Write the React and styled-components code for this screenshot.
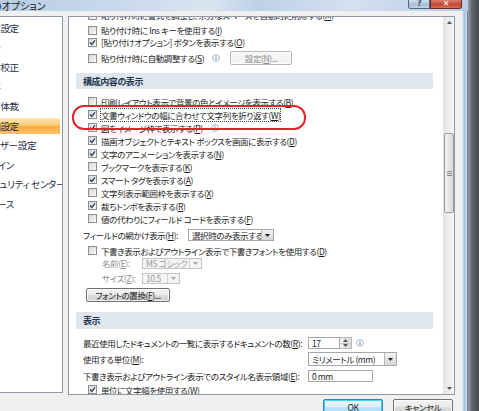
import React from "react";
import styled, { createGlobalStyle } from "styled-components";

const GlobalStyle = createGlobalStyle`
  html, body { margin: 0; padding: 0; background: #55595f; }
  * { box-sizing: border-box; }
`;

const Screen = styled.div`
  position: relative;
  display: flex;
  width: 479px;
  height: 411px;
  overflow: hidden;
  font-family: "Noto Sans CJK JP", "Liberation Sans", sans-serif;
  font-feature-settings: "palt" 1;
  font-size: 8.5px;
  letter-spacing: -0.4px;
  color: #1e1e1e;
`;

const Window = styled.div`
  display: flex;
  flex-direction: column;
  width: 468px;
`;

const Outside = styled.div`
  flex: 1;
  background: linear-gradient(90deg, #9aa1a9 0%, #62676e 35%, #45484d 100%);
`;

const TitleBar = styled.div`
  height: 13px;
  display: flex;
  justify-content: space-between;
  background: linear-gradient(100deg, #b8cde3 0%, #c8d9eb 25%, #d9e5f2 45%, #bdd1e7 55%, #d3e1f0 75%, #b7cce3 100%);
`;

const Title = styled.div`
  margin-left: -8px;
  line-height: 11px;
  font-size: 10px;
  letter-spacing: 0;
  color: #1b1b1b;
`;

const Caption = styled.div`
  display: flex;
  margin-right: 6px;
  height: 9px;
`;

const CaptionBtn = styled.div`
  width: ${(p) => p.$w}px;
  height: 9px;
  display: flex;
  align-items: flex-end;
  justify-content: center;
  font-family: "DejaVu Sans", sans-serif;
  font-weight: bold;
  font-size: 8px;
  line-height: 8px;
  color: ${(p) => (p.$close ? "#fff" : "#3b4e66")};
  border: 1px solid ${(p) => (p.$close ? "#6d2a22" : "#55677e")};
  border-top: none;
  border-radius: ${(p) => (p.$close ? "0 0 3px 0" : "0 0 0 3px")};
  background: ${(p) =>
    p.$close
      ? "linear-gradient(#d77f6f, #c4432f 60%, #d9745c)"
      : "linear-gradient(#d3dfec, #a9bdd5 60%, #c5d5e6)"};
`;

const ClientRow = styled.div`
  flex: 1;
  display: flex;
`;

const Client = styled.div`
  width: 462px;
  background: #f0f0f0;
  padding-top: 5px;
  display: flex;
  flex-direction: column;
`;

const FrameRight = styled.div`
  flex: 1;
  background: linear-gradient(90deg, #dfe9f4, #a7c2de 50%, #d3e2f1);
  border-right: 1px solid #6f8198;
`;

const Main = styled.div`
  display: flex;
  align-items: flex-start;
  gap: 5px;
`;

const Nav = styled.div`
  width: 63px;
  height: 377px;
  background: #fff;
  border: 1px solid #8e9aa8;
  border-left: none;
  padding-top: 3px;
  overflow: hidden;
`;

const NavItem = styled.div`
  height: 16px;
  margin: 0 2px 3.5px 0;
  line-height: 16px;
  font-size: 9.5px;
  letter-spacing: -0.3px;
  color: #1d2c46;
  white-space: nowrap;
  background: ${(p) =>
    p.$active ? "linear-gradient(#fde7b8, #fccb74 45%, #f9ab42 55%, #fbc466)" : "transparent"};
`;

const NavLabel = styled.span`
  margin-left: -18px;
`;

const Panel = styled.div`
  width: 387px;
  height: 379px;
  background: #fff;
  border: 1px solid #8e9aa8;
  display: flex;
  overflow: hidden;
`;

const ScrollArea = styled.div`
  flex: 1;
  overflow: hidden;
`;

const List = styled.div`
  margin-top: -11px;
  padding: 0 10px 0 7px;
  display: flex;
  flex-direction: column;
`;

const CheckRow = styled.div`
  height: ${(p) => p.$h || 13}px;
  display: flex;
  align-items: center;
  gap: 4px;
  padding-left: 12px;
  white-space: nowrap;
  color: ${(p) => (p.$disabled ? "#8d8d8d" : "inherit")};
`;

const FieldRow = styled.div`
  height: ${(p) => p.$h || 13}px;
  margin-top: ${(p) => p.$mt || 0}px;
  display: flex;
  align-items: center;
  padding-left: ${(p) => p.$pl ?? 7}px;
  white-space: nowrap;
`;

const FieldLabel = styled.span`
  width: ${(p) => p.$w}px;
  flex: none;
  color: ${(p) => (p.$disabled ? "#8d8d8d" : "inherit")};
`;

const Section = styled.div`
  height: ${(p) => p.$h}px;
  margin: ${(p) => p.$mt}px 0 ${(p) => p.$mb}px;
  background: #dfe6ee;
  padding-left: 7px;
  display: flex;
  align-items: center;
  font-weight: bold;
  font-size: 9px;
  color: #22324c;
`;

const Box = styled.span`
  width: 9px;
  height: 9px;
  flex: none;
  border: 1px solid #8e8f8f;
  background: linear-gradient(135deg, #d6d6d6, #f9f9f9);
  display: flex;
`;

const Focus = styled.span`
  outline: 1px dotted #444;
  outline-offset: 0;
`;

const Btn = styled.div`
  width: ${(p) => p.$w}px;
  height: ${(p) => p.$h || 14}px;
  display: flex;
  align-items: center;
  justify-content: center;
  border: 1px solid ${(p) => (p.$disabled ? "#b3b7ba" : p.$default ? "#3c7fb1" : "#707070")};
  border-radius: 2px;
  color: ${(p) => (p.$disabled ? "#8b8b8b" : "#1e1e1e")};
  background: ${(p) =>
    p.$disabled
      ? "#f4f4f4"
      : p.$default
      ? "linear-gradient(#eaf6fd, #d9f0fc 50%, #bee6fd 51%, #a7d9f5)"
      : "linear-gradient(#f2f2f2, #ebebeb 50%, #dddddd 51%, #cfcfcf)"};
  box-shadow: inset 0 0 0 1px ${(p) => (p.$default ? "#48d0f8" : "rgba(255,255,255,0.7)")};
`;

const Select = styled.div`
  width: ${(p) => p.$w}px;
  height: ${(p) => p.$h || 12}px;
  flex: none;
  display: flex;
  border: 1px solid ${(p) => (p.$disabled ? "#c2c5c8" : "#a3a9b1")};
  background: ${(p) => (p.$disabled ? "#f4f4f4" : "#fff")};
  color: ${(p) => (p.$disabled ? "#9a9a9a" : "#1e1e1e")};
  overflow: hidden;
`;

const SelectText = styled.span`
  flex: 1;
  padding-left: 3px;
  display: flex;
  align-items: center;
  white-space: nowrap;
  overflow: hidden;
`;

const DropBtn = styled.span`
  width: 12px;
  flex: none;
  display: flex;
  align-items: center;
  justify-content: center;
  border-left: 1px solid ${(p) => (p.$disabled ? "#d0d3d6" : "#b5bac0")};
  background: ${(p) => (p.$disabled ? "#f4f4f4" : "linear-gradient(#f4f4f4, #e4e4e4 50%, #d6d6d6)")};
`;

const Spin = styled.span`
  width: 12px;
  height: 12px;
  flex: none;
  display: flex;
  flex-direction: column;
  border: 1px solid #b5bac0;
  border-left: none;
  background: linear-gradient(90deg, #f2f2f2, #dcdcdc);
`;

const SpinHalf = styled.span`
  flex: 1;
  display: flex;
  align-items: center;
  justify-content: center;
  & + & { border-top: 1px solid #c4c8cc; }
`;

const Gap = styled.span`
  width: ${(p) => p.$w}px;
  flex: none;
`;

const Scrollbar = styled.div`
  width: 11px;
  display: flex;
  flex-direction: column;
  background: linear-gradient(90deg, #e6e6e6, #f5f5f5);
  border-left: 1px solid #e3e3e3;
`;

const ArrowBtn = styled.div`
  height: 11px;
  display: flex;
  align-items: center;
  justify-content: center;
`;

const Thumb = styled.div`
  height: 80px;
  margin-top: ${(p) => p.$top}px;
  border: 1px solid #9a9a9a;
  border-radius: 2px;
  background: linear-gradient(90deg, #f4f4f4, #e5e5e5 50%, #d9d9d9);
  display: flex;
  align-items: center;
  justify-content: center;
`;

const Track = styled.div`
  flex: 1;
`;

const Footer = styled.div`
  display: flex;
  justify-content: flex-end;
  gap: 10px;
  margin-top: 4px;
  padding-right: 9px;
`;

const Marker = styled.div`
  position: absolute;
  left: 72px;
  top: 105px;
  width: 234px;
  height: 25px;
  border: 2.5px solid #e0242a;
  border-radius: 12px;
  pointer-events: none;
`;

const Check = () => (
  <svg width="7" height="7" viewBox="0 0 7 7">
    <path d="M1 3.6 L2.8 5.4 L6 1.4" fill="none" stroke="#2d4068" strokeWidth="1.4" />
  </svg>
);

const CheckBox = ({ on }) => <Box>{on && <Check />}</Box>;

const Info = () => (
  <svg width="8" height="8" viewBox="0 0 8 8" style={{ marginLeft: 4, flex: "none" }}>
    <circle cx="4" cy="4" r="3.3" fill="#fff" stroke="#8aa3c4" strokeWidth="0.8" />
    <rect x="3.55" y="3.3" width="0.9" height="2.6" fill="#4b73a8" />
    <rect x="3.55" y="1.9" width="0.9" height="0.8" fill="#4b73a8" />
  </svg>
);

const Tri = ({ up, color = "#222" }) => (
  <svg width="5" height="3" viewBox="0 0 5 3">
    <path d={up ? "M0 3 L2.5 0 L5 3 Z" : "M0 0 L5 0 L2.5 3 Z"} fill={color} />
  </svg>
);

const Item = ({ label, k, on, h, info, focus, children }) => {
  const text = (
    <span>
      {label}(<u>{k}</u>)
    </span>
  );
  return (
    <CheckRow $h={h}>
      <CheckBox on={on} />
      {focus ? <Focus>{text}</Focus> : text}
      {info && <Info />}
      {children}
    </CheckRow>
  );
};

const navItems = [
  "基本設定",
  "表示",
  "文章校正",
  "保存",
  "文字体裁",
  "詳細設定",
  "ユーザー設定",
  "アドイン",
  "セキュリティ センター",
  "リソース",
];

const displayItems = [
  ["印刷レイアウト表示で背景の色とイメージを表示する", "B", false],
  ["文書ウィンドウの幅に合わせて文字列を折り返す", "W", true, true],
  ["図をイメージ枠で表示する", "P", true, false, true],
  ["描画オブジェクトとテキスト ボックスを画面に表示する", "D", true],
  ["文字のアニメーションを表示する", "N", true],
  ["ブックマークを表示する", "K", false],
  ["スマート タグを表示する", "A", true],
  ["文字列表示範囲枠を表示する", "X", false],
  ["裁ちトンボを表示する", "R", true],
  ["値の代わりにフィールド コードを表示する", "F", false],
];

export default function App() {
  return (
    <Screen>
      <GlobalStyle />
      <Window>
        <TitleBar>
          <Title>のオプション</Title>
          <Caption>
            <CaptionBtn $w={22}>?</CaptionBtn>
            <CaptionBtn $w={32} $close>
              ✕
            </CaptionBtn>
          </Caption>
        </TitleBar>
        <ClientRow>
          <Client>
            <Main>
              <Nav>
                {navItems.map((n, i) => (
                  <NavItem key={n} $active={i === 5}>
                    <NavLabel>{n}</NavLabel>
                  </NavItem>
                ))}
              </Nav>
              <Panel>
                <ScrollArea>
                  <List>
                    <Item label="貼り付け時に書式を調整し、余分なスペースを自動的に削除する" k="M" on={false} h={18} />
                    <Item label="貼り付け時に Ins キーを使用する" k="I" on={false} h={12} />
                    <Item label="[貼り付けオプション] ボタンを表示する" k="O" on h={12} />
                    <Item label="貼り付け時に自動調整する" k="S" on={false} h={20} info>
                      <Gap $w={2} />
                      <Btn $w={62} $disabled>
                        設定(<u>N</u>)...
                      </Btn>
                    </Item>
                    <Section $h={16} $mt={5} $mb={6}>
                      構成内容の表示
                    </Section>
                    {displayItems.map(([label, k, on, focus, info]) => (
                      <Item key={k} label={label} k={k} on={on} focus={focus} info={info} />
                    ))}
                    <FieldRow $h={20}>
                      <FieldLabel $w={105}>
                        フィールドの網かけ表示(<u>H</u>):
                      </FieldLabel>
                      <Select $w={86} $h={12}>
                        <SelectText>選択時のみ表示する</SelectText>
                        <DropBtn>
                          <Tri />
                        </DropBtn>
                      </Select>
                    </FieldRow>
                    <Item label="下書き表示およびアウトライン表示で下書きフォントを使用する" k="D" on={false} h={11} />
                    <FieldRow $h={14} $pl={26}>
                      <FieldLabel $w={40} $disabled>
                        名前(<u>E</u>):
                      </FieldLabel>
                      <Select $w={60} $h={11} $disabled>
                        <SelectText>MS ゴシック</SelectText>
                        <DropBtn $disabled>
                          <Tri color="#a8a8a8" />
                        </DropBtn>
                      </Select>
                    </FieldRow>
                    <FieldRow $h={16} $pl={26}>
                      <FieldLabel $w={40} $disabled>
                        サイズ(<u>Z</u>):
                      </FieldLabel>
                      <Select $w={38} $h={11} $disabled>
                        <SelectText>10.5</SelectText>
                        <DropBtn $disabled>
                          <Tri color="#a8a8a8" />
                        </DropBtn>
                      </Select>
                    </FieldRow>
                    <FieldRow $h={18} $pl={10}>
                      <Btn $w={84} $h={14}>
                        フォントの置換(<u>F</u>)...
                      </Btn>
                    </FieldRow>
                    <Section $h={17} $mt={8} $mb={6}>
                      表示
                    </Section>
                    <FieldRow $h={16}>
                      <FieldLabel $w={225}>
                        最近使用したドキュメントの一覧に表示するドキュメントの数(<u>R</u>):
                      </FieldLabel>
                      <Select $w={32} $h={12}>
                        <SelectText>17</SelectText>
                      </Select>
                      <Spin>
                        <SpinHalf>
                          <Tri up color="#555" />
                        </SpinHalf>
                        <SpinHalf>
                          <Tri color="#555" />
                        </SpinHalf>
                      </Spin>
                      <Info />
                    </FieldRow>
                    <FieldRow $h={16}>
                      <FieldLabel $w={225}>
                        使用する単位(<u>M</u>):
                      </FieldLabel>
                      <Select $w={89} $h={14}>
                        <SelectText>ミリメートル (mm)</SelectText>
                        <DropBtn>
                          <Tri />
                        </DropBtn>
                      </Select>
                    </FieldRow>
                    <FieldRow $h={17}>
                      <FieldLabel $w={225}>
                        下書き表示およびアウトライン表示でのスタイル名表示領域(<u>E</u>):
                      </FieldLabel>
                      <Select $w={65} $h={12}>
                        <SelectText>0 mm</SelectText>
                      </Select>
                    </FieldRow>
                    <Item label="単位に文字幅を使用する" k="W" on h={11} />
                  </List>
                </ScrollArea>
                <Scrollbar>
                  <ArrowBtn>
                    <Tri up color="#555" />
                  </ArrowBtn>
                  <Thumb $top={105}>
                    <svg width="5" height="5" viewBox="0 0 5 5">
                      <path d="M0 0.5 H5 M0 2.5 H5 M0 4.5 H5" stroke="#6e6e6e" strokeWidth="0.8" />
                    </svg>
                  </Thumb>
                  <Track />
                  <ArrowBtn>
                    <Tri color="#555" />
                  </ArrowBtn>
                </Scrollbar>
              </Panel>
            </Main>
            <Footer>
              <Btn $w={60} $h={16} $default>
                OK
              </Btn>
              <Btn $w={60} $h={16}>
                キャンセル
              </Btn>
            </Footer>
          </Client>
          <FrameRight />
        </ClientRow>
      </Window>
      <Outside />
      <Marker />
    </Screen>
  );
}
